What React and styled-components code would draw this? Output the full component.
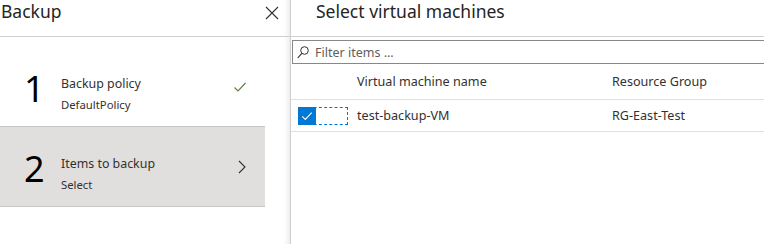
import React from 'react';
import styled, { createGlobalStyle } from 'styled-components';

const Global = createGlobalStyle`
  body {
    margin: 0;
    background: #ffffff;
    font-family: "Noto Sans", "Open Sans", sans-serif;
    color: #323130;
  }
`;

const Page = styled.div`
  display: flex;
  height: 244px;
  width: 764px;
  overflow: hidden;
`;

const LeftPane = styled.div`
  width: 290px;
  flex-shrink: 0;
  border-right: 1px solid #d2d0ce;
  box-shadow: inset -7px 0 6px -6px rgba(0, 0, 0, 0.12);
  display: flex;
  flex-direction: column;
`;

const PaneHeader = styled.div`
  height: 36px;
  border-bottom: 1px solid #d2d0ce;
  display: flex;
  align-items: center;
  justify-content: space-between;
  padding: 0 ${p => p.$right || 0}px 0 ${p => p.$left || 0}px;
  flex-shrink: 0;
`;

const PaneTitle = styled.div`
  font-size: 17.5px;
  line-height: 24px;
  margin-top: -14px;
  color: #252423;
`;

const CloseButton = styled.button`
  border: 0;
  background: none;
  padding: 0;
  width: 14px;
  height: 14px;
  margin-top: -10px;
  display: flex;
`;

const StepList = styled.div`
  padding-top: 10px;
  width: 265px;
`;

const Step = styled.div`
  height: 80px;
  display: flex;
  align-items: center;
  background: ${p => (p.$active ? '#e1dfdd' : '#ffffff')};
  border-bottom: 1px solid #c8c6c4;
  padding: 0 18px 0 24px;
  box-sizing: border-box;
`;

const StepNumber = styled.div`
  width: 37px;
  font-size: 36px;
  line-height: 36px;
  color: #000000;
  margin-top: 4px;
`;

const StepText = styled.div`
  flex: 1;
  display: flex;
  flex-direction: column;
  gap: 5px;
  margin-top: 14px;
`;

const StepTitle = styled.div`
  font-size: 12.4px;
  line-height: 17px;
  color: #323130;
`;

const StepSub = styled.div`
  font-size: 11.3px;
  line-height: 16px;
  color: #323130;
`;

const RightPane = styled.div`
  flex: 1;
  display: flex;
  flex-direction: column;
`;

const FilterBox = styled.div`
  margin: 3px -10px 0 1px;
  height: 22px;
  border: 1px solid #8a8886;
  display: flex;
  align-items: center;
  gap: 6px;
  padding-left: 4px;
`;

const FilterText = styled.span`
  font-size: 12.5px;
  color: #605e5c;
`;

const Row = styled.div`
  display: grid;
  grid-template-columns: 66px 255px 1fr;
  align-items: center;
  height: ${p => p.$h}px;
  border-bottom: 1px solid #e1dfdd;
  font-size: 12.6px;
  color: #323130;
`;

const CheckCell = styled.div`
  margin-left: 7px;
  width: 50px;
  height: 18px;
  box-sizing: border-box;
  border: 1px dashed #0078d4;
  display: flex;
  align-items: center;
`;

const CheckBox = styled.div`
  width: 18px;
  height: 18px;
  margin: -1px;
  background: #0078d4;
  display: flex;
  align-items: center;
  justify-content: center;
`;

const Check = ({ color, size = 14, width = 1.2 }) => (
  <svg width={size} height={size} viewBox="0 0 14 14" fill="none">
    <path d="M1.5 7.5 L5 11 L12.5 3" stroke={color} strokeWidth={width} />
  </svg>
);

export default function App() {
  return (
    <Page>
      <Global />
      <LeftPane>
        <PaneHeader $left={1} $right={11}>
          <PaneTitle>Backup</PaneTitle>
          <CloseButton aria-label="Close">
            <svg width="14" height="14" viewBox="0 0 14 14">
              <path d="M1 1 L13 13 M13 1 L1 13" stroke="#323130" strokeWidth="1.1" />
            </svg>
          </CloseButton>
        </PaneHeader>
        <StepList>
          <Step>
            <StepNumber>1</StepNumber>
            <StepText>
              <StepTitle>Backup policy</StepTitle>
              <StepSub>DefaultPolicy</StepSub>
            </StepText>
            <Check color="#5b7f3a" size={14} width={1.1} />
          </Step>
          <Step $active>
            <StepNumber>2</StepNumber>
            <StepText>
              <StepTitle>Items to backup</StepTitle>
              <StepSub>Select</StepSub>
            </StepText>
            <svg width="10" height="14" viewBox="0 0 10 14">
              <path d="M2 1 L8 7 L2 13" stroke="#323130" strokeWidth="1.1" fill="none" />
            </svg>
          </Step>
        </StepList>
      </LeftPane>
      <RightPane>
        <PaneHeader $left={25}>
          <PaneTitle>Select virtual machines</PaneTitle>
        </PaneHeader>
        <FilterBox>
          <svg width="12" height="13" viewBox="0 0 12 13">
            <circle cx="7.5" cy="4.5" r="3.8" stroke="#323130" strokeWidth="1" fill="none" />
            <path d="M4.8 7.3 L0.8 11.8" stroke="#323130" strokeWidth="1.1" />
          </svg>
          <FilterText>Filter items ...</FilterText>
        </FilterBox>
        <Row $h={35}>
          <span />
          <span>Virtual machine name</span>
          <span>Resource Group</span>
        </Row>
        <Row $h={31}>
          <CheckCell>
            <CheckBox>
              <Check color="#ffffff" size={12} width={1.2} />
            </CheckBox>
          </CheckCell>
          <span>test-backup-VM</span>
          <span>RG-East-Test</span>
        </Row>
      </RightPane>
    </Page>
  );
}
